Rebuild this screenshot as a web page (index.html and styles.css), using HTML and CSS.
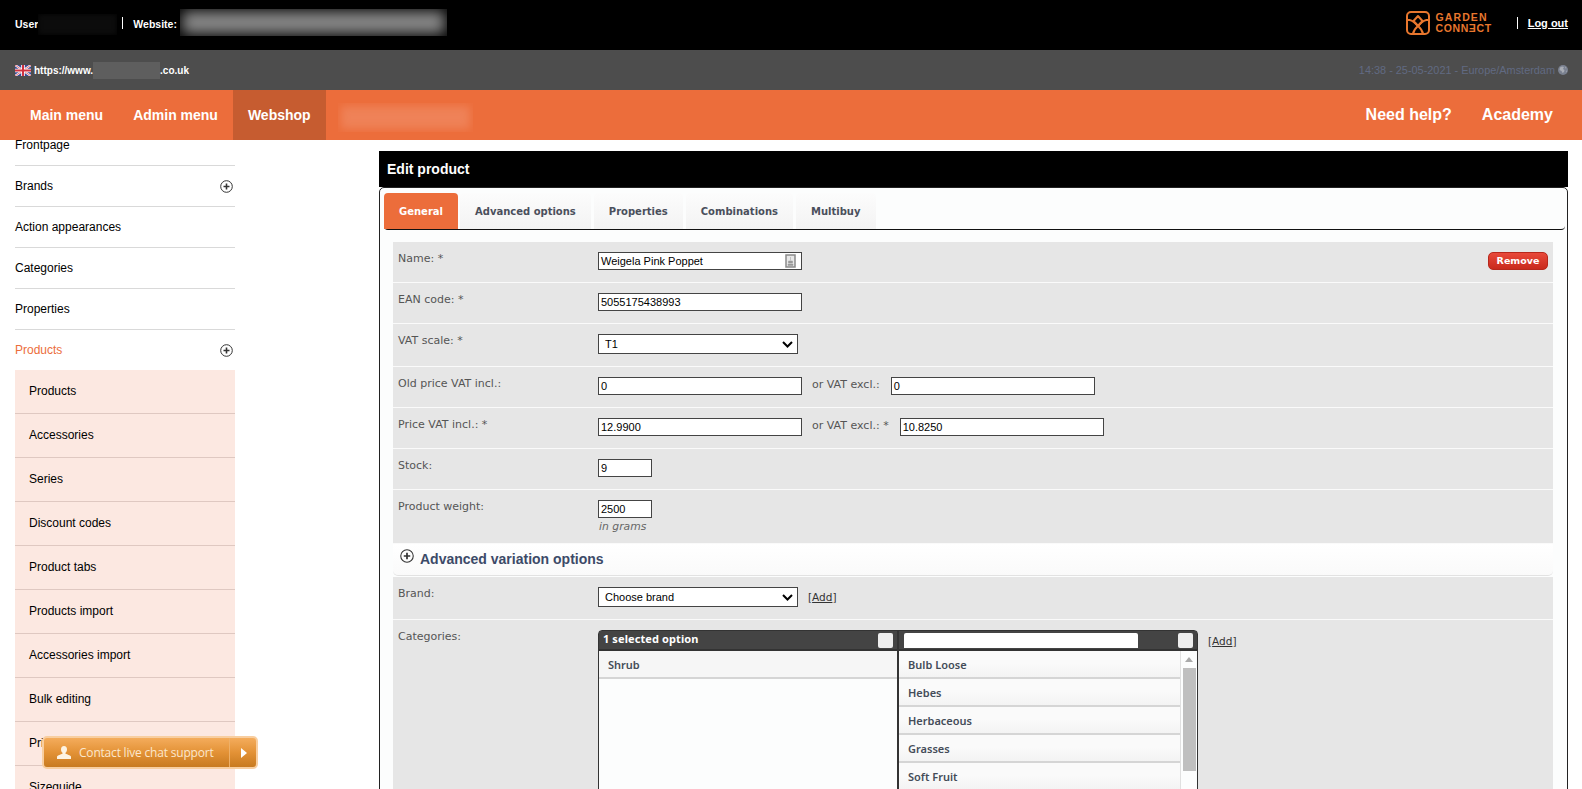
FILE: index.html
```html
<!DOCTYPE html>
<html lang="en">
<head>
<meta charset="utf-8">
<title>Edit product</title>
<link rel="stylesheet" href="styles.css">
</head>
<body>
<header class="site-header">
  <div class="top-bar">
    <span class="top-text">User</span>
    <span class="blur blur-user"></span>
    <span class="pipe pipe-user"></span>
    <span class="top-text">Website:</span>
    <span class="blur blur-site"></span>
    <div class="logo">
      <svg class="logo-mark" width="24" height="24" viewBox="0 0 24 24" fill="none" stroke="#e8772e" stroke-width="2" stroke-linejoin="round" stroke-linecap="round">
        <rect x="1" y="1" width="22" height="22" rx="4"/>
        <path d="M12 5l4.500 5-4.500 5-4.500-5z"/>
        <path d="M1 9h2.500c3 .5 6 3 8.500 6 2.500-3 5.500-5.500 8.500-6H23"/>
        <path d="M7 23c.5-3 2-5.500 5-8 3 2.500 4.500 5 5 8"/>
      </svg>
      <div class="logo-words"><span>GARDEN</span><span class="logo-second">CONNƎCT</span></div>
    </div>
    <span class="pipe pipe-logout"></span>
    <a class="logout" href="#">Log out</a>
  </div>
  <div class="url-bar">
    <svg class="flag" width="16" height="11" viewBox="0 0 16 11">
      <rect width="16" height="11" fill="#3a4a94"/>
      <path d="M0 0l16 11M16 0L0 11" stroke="#fff" stroke-width="2.200"/>
      <path d="M0 0l16 11M16 0L0 11" stroke="#d0313f" stroke-width=".7"/>
      <path d="M8 0v11M0 5.500h16" stroke="#fff" stroke-width="3.600"/>
      <path d="M8 0v11M0 5.500h16" stroke="#d0313f" stroke-width="2"/>
    </svg>
    <span class="url">https://www.</span>
    <span class="blur blur-url"></span>
    <span class="url">.co.uk</span>
    <span class="clock">14:38 - 25-05-2021 - Europe/Amsterdam</span>
    <svg class="globe" width="10" height="10" viewBox="0 0 10 10">
      <circle cx="5" cy="5" r="5" fill="#7a8190"/>
      <path d="M2 2.500l2-1 2 .5-1 2 1.500 1-.5 2-1.500 1-1-2-2-1zM7 1.500l1.500 1.500-1 .5zM8 6l1-.5-.5 2z" fill="#a9adb5"/>
    </svg>
  </div>
  <nav class="main-nav">
    <a class="nav-link" href="#">Main menu</a>
    <a class="nav-link" href="#">Admin menu</a>
    <a class="nav-link nav-active" href="#">Webshop</a>
    <span class="blur blur-nav"></span>
    <a class="help-link help-first" href="#">Need help?</a>
    <a class="help-link help-last" href="#">Academy</a>
  </nav>
</header>

<div class="layout">
  <aside class="sidebar">
    <ul class="side-list">
      <li class="side-item">Frontpage</li>
      <li class="side-item">Brands
        <svg class="plus" width="13" height="13" viewBox="0 0 13 13"><circle cx="6.500" cy="6.500" r="5.800" fill="none" stroke="#333" stroke-width="1"/><path d="M3.500 6.500h6M6.500 3.500v6" stroke="#333" stroke-width="1.600"/></svg>
      </li>
      <li class="side-item">Action appearances</li>
      <li class="side-item">Categories</li>
      <li class="side-item">Properties</li>
      <li class="side-item side-open">Products
        <svg class="plus" width="13" height="13" viewBox="0 0 13 13"><circle cx="6.500" cy="6.500" r="5.800" fill="none" stroke="#333" stroke-width="1"/><path d="M3.500 6.500h6M6.500 3.500v6" stroke="#333" stroke-width="1.600"/></svg>
      </li>
    </ul>
    <ul class="sub-list">
      <li class="sub-item">Products</li>
      <li class="sub-item">Accessories</li>
      <li class="sub-item">Series</li>
      <li class="sub-item">Discount codes</li>
      <li class="sub-item">Product tabs</li>
      <li class="sub-item">Products import</li>
      <li class="sub-item">Accessories import</li>
      <li class="sub-item">Bulk editing</li>
      <li class="sub-item">Price rules</li>
      <li class="sub-item">Sizeguide</li>
    </ul>
  </aside>

  <main class="content">
    <h1 class="page-title">Edit product</h1>
    <section class="panel">
      <div class="tabs">
        <a class="tab tab-active" href="#">General</a>
        <a class="tab" href="#">Advanced options</a>
        <a class="tab" href="#">Properties</a>
        <a class="tab" href="#">Combinations</a>
        <a class="tab" href="#">Multibuy</a>
      </div>
      <form class="form">
        <div class="row">
          <label class="label">Name: *</label>
          <div class="field input-wide name-field">
            <span class="val">Weigela Pink Poppet</span>
            <svg class="lang-icon" width="11" height="14" viewBox="0 0 11 14"><rect x="1" y="1" width="9" height="12" fill="#e8e8e8" stroke="#8a8a8a" stroke-width="1.500"/><path d="M5.500 3v3.500M3.500 7h4v2h-4zM3 10h5v1.500H3z" fill="#999" stroke="#999" stroke-width=".5"/></svg>
          </div>
          <a class="remove" href="#">Remove</a>
        </div>
        <div class="row">
          <label class="label">EAN code: *</label>
          <div class="field input-wide"><span class="val">5055175438993</span></div>
        </div>
        <div class="row row-select">
          <label class="label">VAT scale: *</label>
          <div class="select select-vat"><span>T1</span><svg width="11" height="7" viewBox="0 0 11 7"><path d="M1 1l4.500 4.500L10 1" fill="none" stroke="#000" stroke-width="2"/></svg></div>
        </div>
        <div class="row">
          <label class="label">Old price VAT incl.:</label>
          <div class="field input-wide"><span class="val">0</span></div>
          <span class="or-label">or VAT excl.:</span>
          <div class="field input-wide"><span class="val">0</span></div>
        </div>
        <div class="row">
          <label class="label">Price VAT incl.: *</label>
          <div class="field input-wide"><span class="val">12.9900</span></div>
          <span class="or-label">or VAT excl.: *</span>
          <div class="field input-wide"><span class="val">10.8250</span></div>
        </div>
        <div class="row">
          <label class="label">Stock:</label>
          <div class="field input-small"><span class="val">9</span></div>
        </div>
        <div class="row row-weight">
          <label class="label">Product weight:</label>
          <div class="stack">
            <div class="field input-small"><span class="val">2500</span></div>
            <em class="hint">in grams</em>
          </div>
        </div>
        <div class="section-head">
          <svg width="14" height="14" viewBox="0 0 13 13"><circle cx="6.500" cy="6.500" r="5.800" fill="none" stroke="#333" stroke-width="1"/><path d="M3.500 6.500h6M6.500 3.500v6" stroke="#333" stroke-width="1.600"/></svg>
          <h2 class="section-title">Advanced variation options</h2>
        </div>
        <div class="row row-select row-brand">
          <label class="label">Brand:</label>
          <div class="select select-brand"><span>Choose brand</span><svg width="11" height="7" viewBox="0 0 11 7"><path d="M1 1l4.500 4.500L10 1" fill="none" stroke="#000" stroke-width="2"/></svg></div>
          <a class="add" href="#">[<u>Add</u>]</a>
        </div>
        <div class="row row-cats">
          <label class="label">Categories:</label>
          <div class="multi">
            <div class="multi-col multi-left">
              <div class="multi-head"><span>1 selected option</span><i class="square"></i></div>
              <div class="opt opt-chosen">Shrub</div>
            </div>
            <div class="multi-col multi-right">
              <div class="multi-head"><i class="search"></i><i class="square"></i></div>
              <div class="multi-body">
                <div class="opts">
                  <div class="opt">Bulb Loose</div>
                  <div class="opt">Hebes</div>
                  <div class="opt">Herbaceous</div>
                  <div class="opt">Grasses</div>
                  <div class="opt">Soft Fruit</div>
                </div>
                <div class="scrollbar"><i class="arrow"></i><i class="thumb"></i></div>
              </div>
            </div>
          </div>
          <a class="add add-cats" href="#">[<u>Add</u>]</a>
        </div>
      </form>
    </section>
  </main>
</div>

<div class="chat">
  <svg width="14" height="13" viewBox="0 0 14 13"><path d="M7 0c2 0 3 1.500 3 3.500 0 1.500-.7 2.700-1.500 3.300v1c2 .7 4.500 1.500 5.500 2.700V13H0v-2.500c1-1.200 3.500-2 5.500-2.700v-1C4.700 6.200 4 5 4 3.500 4 1.500 5 0 7 0z" fill="#fdf3e2"/></svg>
  <span class="chat-text">Contact live chat support</span>
  <span class="chat-arrow"></span>
</div>
</body>
</html>
```

FILE: styles.css
```css
* { box-sizing: border-box; }
html, body { margin: 0; height: 789px; overflow: hidden; background: #fff; }
body { font-family: "Liberation Sans", Arial, sans-serif; font-size: 12px; color: #000; }
a { color: inherit; text-decoration: none; }
ul { list-style: none; margin: 0; padding: 0; }

.blur { display: block; flex: none; }

/* Header */
.top-bar { height: 50px; background: #000; display: flex; align-items: center; padding: 0 14px 4px 15px; color: #fff; }
.top-text { font-size: 10.5px; font-weight: bold; line-height: 13px; margin-top: 2px; }
.pipe { width: 1px; height: 12px; background: #fff; flex: none; }
.blur-user { width: 79px; height: 21px; margin: 2px 5px 0 0; background: #0c0c0c; box-shadow: inset 0 0 5px #000; }
.pipe-user { margin-right: 10px; }
.blur-site { width: 267px; height: 27px; margin: -2px 0 0 3px; background: #888; box-shadow: inset 0 0 14px 2px #000; }
.logo { margin-left: auto; display: flex; align-items: center; gap: 6px; color: #e8772e; }
.logo-mark { display: block; }
.logo-words { display: flex; flex-direction: column; font-size: 10.5px; line-height: 11px; font-weight: bold; letter-spacing: 1.1px; }
.logo-second { letter-spacing: .6px; }
.pipe-logout { margin: 0 10px 0 25px; }
.logout { font-size: 11px; font-weight: bold; text-decoration: underline; }

.url-bar { height: 40px; background: #4d4d4d; display: flex; align-items: center; padding-left: 15px; padding-right: 14px; color: #fff; font-size: 10px; font-weight: bold; }
.flag { margin-right: 3px; flex: none; }
.blur-url { width: 67px; height: 17px; background: #5e5e5e; }
.clock { margin-left: auto; font-size: 10.9px; font-weight: normal; color: #616a82; }
.globe { margin-left: 3px; flex: none; }

.main-nav { height: 50px; background: #ec6d3b; display: flex; align-items: stretch; color: #fff; padding-left: 15px; }
.nav-link { display: flex; align-items: center; padding: 0 15px; font-size: 14px; font-weight: bold; }
.nav-active { background: #c65c30; }
.blur-nav { width: 135px; height: 29px; margin: 13px 0 0 12px; background: #ef8258; box-shadow: inset 0 0 8px 3px #ec6d3b; }
.help-link { display: flex; align-items: center; font-size: 16px; font-weight: bold; }
.help-first { margin-left: auto; }
.help-last { margin-left: 30px; margin-right: 29px; }

/* Layout */
.layout { display: flex; height: 649px; overflow: hidden; align-items: flex-start; }

/* Sidebar */
.sidebar { width: 220px; margin-left: 15px; margin-top: -15px; flex: none; }
.side-item { height: 41px; border-bottom: 1px solid #d9d9d9; display: flex; align-items: center; justify-content: space-between; padding-right: 2px; font-size: 12px; }
.side-open { color: #ec6d3b; border-bottom: 0; height: 40px; }
.plus { flex: none; }
.sub-list { background: #fce8e1; }
.sub-item { height: 44px; border-bottom: 1px solid #dfc8c1; display: flex; align-items: center; padding-left: 14px; padding-bottom: 2px; }
.sub-item:last-child { border-bottom: 0; }

/* Main */
.content { width: 1189px; margin-left: 144px; padding-top: 11px; flex: none; }
.page-title { margin: 0; height: 36px; background: #000; color: #fff; font-size: 14px; font-weight: bold; line-height: 36px; padding-left: 8px; }
.panel { border: 1px solid #222; border-radius: 5px 5px 0 0; background: #fcfdfd; padding: 5px 2px 0 4px; min-height: 700px; }
.tabs { display: flex; gap: 3px; height: 37px; border-bottom: 1px solid #111; border-radius: 0 0 4px 4px; }
.tab { display: flex; align-items: center; padding: 0 15px; background: linear-gradient(#fcfcfc, #f3f3f3); border-radius: 4px 4px 0 0; font-family: "DejaVu Sans", sans-serif; font-size: 10px; font-weight: bold; color: #4a4f5c; }
.tab-active { background: #ec6d3b; color: #fff; margin-right: -1px; }

.form { margin: 12px 12px 0 9px; }
.row { display: flex; align-items: flex-start; background: #e6e6e6; border-bottom: 1px solid #fafafa; padding: 10px 5px 12px; }
.label { width: 200px; flex: none; font-family: "DejaVu Sans", sans-serif; font-size: 11px; line-height: 13px; color: #555; }
.field { height: 18px; border: 1px solid #444; background: #fff; display: flex; align-items: center; padding: 0 2px; font-size: 11px; flex: none; }
.input-wide { width: 204px; }
.input-small { width: 54px; }
.name-field { justify-content: space-between; padding-right: 5px; }
.lang-icon { flex: none; }
.val { line-height: 14px; }
.or-label { font-family: "DejaVu Sans", sans-serif; font-size: 11px; color: #555; margin: 1px 11px 0 10px; line-height: 13px; }
.remove { margin-left: auto; margin-right: 0; width: 60px; height: 18px; border: 1px solid #b7281c; border-radius: 5px; background: linear-gradient(#e8493a, #c92a1d); color: #fff; font-family: "DejaVu Sans", sans-serif; font-size: 9.5px; font-weight: bold; text-align: center; line-height: 16px; }
.select { height: 20px; border: 1px solid #444; background: #fff; display: flex; align-items: center; justify-content: space-between; padding: 0 4px 0 6px; font-size: 11px; flex: none; width: 200px; }
.row-weight { padding-bottom: 9px; }
.stack { display: flex; flex-direction: column; }
.hint { font-family: "DejaVu Sans", sans-serif; font-size: 10.8px; color: #666; line-height: 14px; padding-left: 1px; margin-top: 2px; }
.section-head { height: 32px; display: flex; align-items: flex-start; gap: 6px; padding: 5px 0 0 7px; background: linear-gradient(#fff, #fafafa); border-radius: 0 0 5px 5px; border-bottom: 1px solid #e2e2e2; margin-bottom: 1px; }
.section-title { margin: 0; font-size: 14px; font-weight: bold; line-height: 18px; color: #3c4a68; padding-top: 1px; }
.add { font-family: "DejaVu Sans", sans-serif; font-size: 10.5px; color: #333; margin: 3px 0 0 10px; line-height: 14px; }
.add-cats { margin-top: 4px; }

.row-cats { padding-bottom: 0; border-bottom: 0; height: 300px; }
.multi { display: flex; width: 600px; flex: none; border: 1px solid #333; border-radius: 4px 4px 0 0; background: #fcfdfd; height: 280px; }
.multi-col { display: flex; flex-direction: column; }
.multi-left { width: 300px; border-right: 2px solid #333; }
.multi-right { flex: 1; min-width: 0; }
.multi-head { height: 20px; background: #444; display: flex; align-items: center; justify-content: space-between; padding: 0 4px 0 4px; border-bottom: 2px solid #333; color: #fff; font-family: "Noto Sans", sans-serif; font-size: 11px; font-weight: bold; letter-spacing: .1px; flex: none; }
.multi-head span { line-height: 14px; margin-top: -3px; }
.square { width: 15px; height: 15px; background: #eee; border-radius: 2px; flex: none; }
.search { width: 234px; height: 15px; background: #fff; border-radius: 2px 2px 0 0; margin-left: 1px; flex: none; }
.opt { height: 28px; padding-left: 9px; border-bottom: 2px solid #d5d5d5; background: linear-gradient(#fafafa 50%, #f3f3f3); font-family: "Noto Sans", sans-serif; font-size: 11px; font-weight: 600; line-height: 28px; color: #444c58; }
.opt-chosen { background: #f6f6f6; }
.multi-body { display: flex; flex: 1; }
.opts { flex: 1; }
.scrollbar { width: 17px; flex: none; background: #fcfdfd; border-left: 1px solid #e0e0e0; display: flex; flex-direction: column; align-items: center; padding-top: 6px; }
.arrow { width: 0; height: 0; border: 4px solid transparent; border-top: 0; border-bottom: 5px solid #aaa; }
.thumb { width: 13px; height: 103px; background: #bfbfbf; margin-top: 6px; }

/* Chat overlay */
.chat { position: absolute; left: 42px; top: 736px; width: 216px; height: 33px; display: flex; align-items: center; padding-left: 13px; border: 2px solid #f8cea0; border-radius: 5px; background: linear-gradient(#f4ac5c, #e39236 50%, #c87a20); color: #fbe7cd; }
.chat-text { font-family: "Open Sans", sans-serif; font-size: 12px; letter-spacing: -.2px; margin-left: 8px; }
.chat-arrow { margin-left: auto; width: 27px; height: 29px; border-left: 1px solid #eeb068; position: relative; }
.chat-arrow::after { content: ""; position: absolute; left: 11px; top: 10px; border: 5px solid transparent; border-left: 6px solid #fff; border-right: 0; }
```
